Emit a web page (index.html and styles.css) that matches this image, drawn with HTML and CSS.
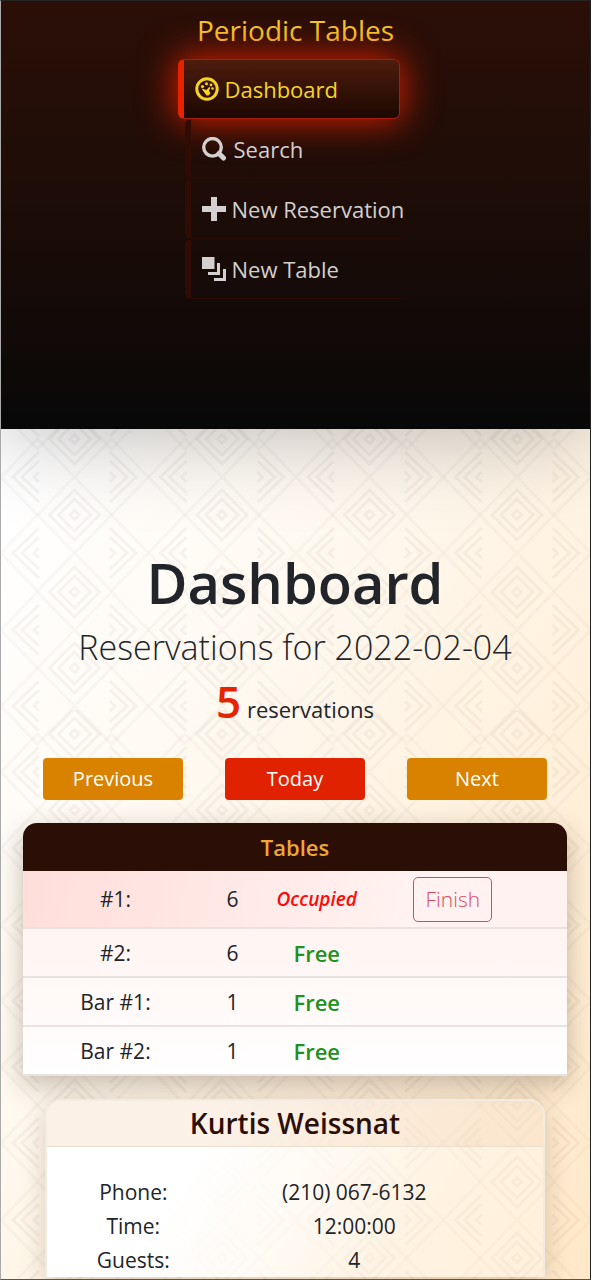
FILE: index.html
```html
<!DOCTYPE html>
<html lang="en">
<head>
<meta charset="utf-8">
<meta name="viewport" content="width=device-width, initial-scale=1">
<title>Periodic Tables</title>
<link rel="stylesheet" href="styles.css">
</head>
<body>
<div class="page">
  <header class="sidebar">
    <a class="brand" href="#">Periodic Tables</a>
    <nav>
      <ul class="menu">
        <li><a class="menu-link active" href="#">
          <svg class="icon" viewBox="0 0 24 24" aria-hidden="true"><circle cx="12" cy="12" r="10.200" fill="none" stroke="currentColor" stroke-width="3"/><circle cx="7.500" cy="9.500" r="1.600"/><circle cx="11.500" cy="6.800" r="1.500"/><circle cx="16" cy="8" r="1.400"/><circle cx="17.500" cy="11.500" r="1.300"/><path d="M6.500 11.500l5 1.500 2.700-3 1 .8-1.200 3 1.500 2.500-2 2.200c-1.500.3-3-.5-3.400-2z"/></svg><span>Dashboard</span></a></li>
        <li><a class="menu-link" href="#">
          <svg class="icon" viewBox="0 0 24 24" aria-hidden="true"><circle cx="10.500" cy="10.300" r="8.800" fill="none" stroke="currentColor" stroke-width="3.400"/><path d="M17 16.500l4.500 4.500" stroke="currentColor" stroke-width="5" stroke-linecap="round"/></svg><span class="spaced">Search</span></a></li>
        <li><a class="menu-link" href="#">
          <svg class="icon" viewBox="0 0 24 24" aria-hidden="true"><path d="M9 0h6v9h9v6h-9v9H9v-9H0V9h9z"/></svg><span>New Reservation</span></a></li>
        <li><a class="menu-link" href="#">
          <svg class="icon" viewBox="0 0 24 24" aria-hidden="true"><path d="M0 0h12.500v12H0zM15 6h3v12H6v-3h9zM21 12h3v12H12v-3h9z"/></svg><span>New Table</span></a></li>
      </ul>
    </nav>
  </header>
  <main class="content">
    <h1>Dashboard</h1>
    <h2>Reservations for 2022-02-04</h2>
    <p class="count"><strong>5</strong> reservations</p>
    <div class="days">
      <button type="button">Previous</button>
      <button type="button" class="today">Today</button>
      <button type="button">Next</button>
    </div>
    <table class="tables">
      <colgroup><col class="c-name"><col class="c-size"><col class="c-state"><col></colgroup>
      <thead><tr><th colspan="4">Tables</th></tr></thead>
      <tbody>
        <tr class="busy"><td>#1:</td><td>6</td><td class="occupied">Occupied</td><td class="action"><button type="button">Finish</button></td></tr>
        <tr><td>#2:</td><td>6</td><td class="free">Free</td><td></td></tr>
        <tr><td>Bar #1:</td><td>1</td><td class="free">Free</td><td></td></tr>
        <tr><td>Bar #2:</td><td>1</td><td class="free">Free</td><td></td></tr>
      </tbody>
    </table>
    <article class="card">
      <h3>Kurtis Weissnat</h3>
      <dl>
        <dt>Phone:</dt><dd>(210) 067-6132</dd>
        <dt>Time:</dt><dd>12:00:00</dd>
        <dt>Guests:</dt><dd>4</dd>
      </dl>
    </article>
  </main>
</div>
</body>
</html>
```
FILE: styles.css
```css
* { box-sizing: border-box; }

body {
  margin: 0;
  font-family: "Open Sans", "Noto Sans", sans-serif;
  font-size: 22px;
  line-height: 34px;
  color: #212529;
}

h1, h2, h3, p, ul, dl, dd { margin: 0; padding: 0; }

.page {
  height: 100vh;
  overflow: hidden;
  display: flex;
  flex-direction: column;
  border: 1px solid #444;
  border-color: #242222 #222 #555 #aaa;
}

.sidebar {
  flex: none;
  display: flex;
  flex-direction: column;
  align-items: center;
  min-height: 428px;
  padding-top: 11px;
  background: linear-gradient(#2b0f07, #1c0c07 50%, #080808);
  box-shadow: 0 0 90px rgba(0, 0, 0, 0.3);
  z-index: 1;
}

.brand {
  font-size: 28px;
  line-height: 36px;
  color: #f5c827;
  text-decoration: none;
}

.menu {
  list-style: none;
  width: 222px;
  margin-top: 11px;
}

.menu-link {
  display: flex;
  align-items: center;
  gap: 6px;
  height: 60px;
  padding-left: 11px;
  border: 1px solid transparent;
  border-left: 6px solid #300c05;
  border-bottom-color: #2b0b05;
  border-radius: 6px;
  color: #d3d0cf;
  text-decoration: none;
  white-space: nowrap;
}

.menu-link.active {
  margin-left: -7px;
  margin-right: 7px;
  color: #f7d424;
  border-color: #a81f08;
  border-left-color: #e62200;
  background: linear-gradient(#4d1c0d, #1c0802) padding-box;
  box-shadow: 0 0 36px 2px #d82000;
}

.icon {
  flex: none;
  width: 24px;
  height: 24px;
  fill: currentColor;
}

.spaced { padding-left: 2px; }

.content {
  flex: 1 0 auto;
  display: flex;
  flex-direction: column;
  align-items: center;
  padding: 119px 23px 0 22px;
  text-align: center;
  background:
    url("data:image/svg+xml,%3Csvg xmlns='http://www.w3.org/2000/svg' xmlns:xlink='http://www.w3.org/1999/xlink' width='295' height='295' viewBox='0 0 295 295'%3E%3Cdefs%3E%3Cg id='u' fill='none' stroke='%23503828' stroke-width='3' stroke-opacity='.05'%3E%3Cpath stroke-opacity='.03' d='M0 38L36.500 0 73.500 38 110.500 0 147.500 38M0 38L36.500 76 73.500 38 110.500 76 147.500 38'/%3E%3Cpath d='M48.500 0l25-25 25 25-25 25zM57.500 0l16-16 16 16-16 16zM69 0l4.500-4.500L78 0l-4.500 4.500zM38 13L12 38l26 25M38 22L21 38l17 16M38 33l-5 5 5 5M109 13l26 25-26 25M109 22l17 16-17 16M109 33l5 5-5 5'/%3E%3C/g%3E%3Cg id='c'%3E%3Cuse xlink:href='%23u' y='24'/%3E%3Cuse xlink:href='%23u' y='100'/%3E%3Cuse xlink:href='%23u' y='177'/%3E%3Cuse xlink:href='%23u' y='253'/%3E%3Cuse xlink:href='%23u' y='-42'/%3E%3C/g%3E%3C/defs%3E%3Cuse xlink:href='%23c'/%3E%3Cuse xlink:href='%23c' x='147.500'/%3E%3C/svg%3E") 0 -14px,
    linear-gradient(120deg, #fff 5%, #fff8ee 40%, #ffe8c8);
}

h1 {
  font-size: 56px;
  line-height: 68px;
  font-weight: 600;
}

h2 {
  margin-top: 11px;
  font-size: 34px;
  line-height: 40px;
  font-weight: 300;
}

.count {
  margin-top: 8px;
  line-height: 52px;
}

.count strong {
  font-size: 44px;
  font-weight: 600;
  color: #e52400;
}

.days {
  width: 100%;
  display: flex;
  justify-content: space-between;
  margin-top: 23px;
  padding: 0 20px;
}

.days button {
  width: 140px;
  height: 42px;
  border: 0;
  border-radius: 4px;
  background: #d88200;
  color: #fff;
  font: inherit;
  font-size: 20px;
}

.days .today { background: #e12200; }

.tables {
  width: 100%;
  margin-top: 23px;
  border-collapse: separate;
  border-spacing: 0;
  table-layout: fixed;
  border-radius: 14px 14px 0 0;
  background: linear-gradient(#fff0ed 20%, #fff);
  box-shadow: 0 8px 26px rgba(60, 40, 20, 0.3);
}

.c-name { width: 34%; }
.c-size { width: 9%; }
.c-state { width: 22%; }

.tables th {
  height: 48px;
  padding: 0;
  border-radius: 14px 14px 0 0;
  background: #2b0e06;
  color: #f0a636;
  font-weight: 600;
}

.tables td {
  height: 49px;
  padding: 0;
  border-bottom: 2px solid #e9e2e1;
  font-size: 21px;
}

.tables .busy td { height: 58px; }
.busy { background: linear-gradient(100deg, #ffdeda, #fff2f0 70%); }

.tables .occupied {
  color: #ff0808;
  font-size: 19px;
  font-weight: 600;
  font-style: italic;
}

.tables .free {
  color: #219121;
  font-size: 22px;
  font-weight: 600;
}

.tables .action { padding-right: 38px; }

.action button {
  height: 45px;
  padding: 0 11px;
  border: 1px solid #e0455a;
  border-radius: 5px;
  background: transparent;
  color: #dc4a60;
  font: inherit;
  font-weight: 300;
}

.card {
  align-self: stretch;
  margin: 23px 22px 0;
  border: 2px solid #f3ebe0;
  border-bottom: 0;
  border-radius: 16px 16px 0 0;
  background: linear-gradient(120deg, #fff 30%, rgba(255, 255, 255, 0.3) 75%);
  box-shadow: 0 6px 26px rgba(80, 50, 20, 0.22);
}

.card h3 {
  padding: 3px 0 4px;
  border-bottom: 1px solid #eadfcf;
  border-radius: 14px 14px 0 0;
  background: rgba(240, 200, 160, 0.25);
  color: #2b0e06;
  font-size: 28px;
  line-height: 38px;
  font-weight: 600;
}

.card dl {
  display: grid;
  grid-template-columns: 3fr 7fr;
  padding: 28px 34px 0 20px;
  font-size: 21px;
}
```
